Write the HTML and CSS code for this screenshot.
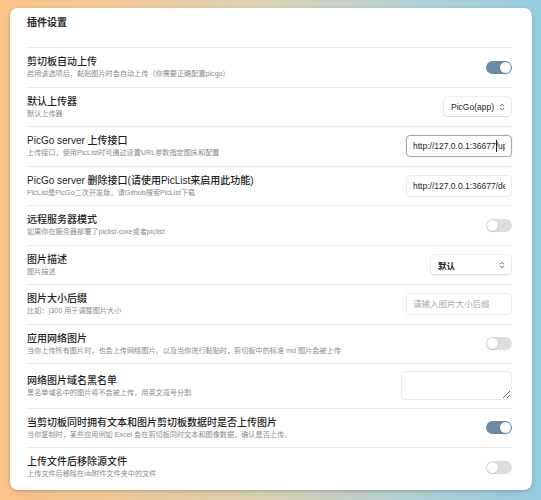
FILE: index.html
```html
<!DOCTYPE html>
<html lang="zh-CN">
<head>
<meta charset="utf-8">
<title>插件设置</title>
<link rel="stylesheet" href="styles.css">
</head>
<body>
<div class="page">
  <div class="card">
    <div class="heading">插件设置</div>

    <div class="row">
      <div class="info">
        <div class="name">剪切板自动上传</div>
        <div class="desc">启用该选项后，黏贴图片时会自动上传（你需要正确配置picgo）</div>
      </div>
      <div class="toggle on"><span class="knob"></span></div>
    </div>

    <div class="row">
      <div class="info">
        <div class="name">默认上传器</div>
        <div class="desc">默认上传器</div>
      </div>
      <div class="select sel-app"><span>PicGo(app)</span>
        <svg class="chev" viewBox="0 0 6 8" width="6" height="8"><path d="M1.2 3 L3 1.3 L4.8 3 M1.2 5 L3 6.7 L4.8 5" fill="none" stroke="#555" stroke-width="0.9" stroke-linecap="round" stroke-linejoin="round"/></svg>
      </div>
    </div>

    <div class="row">
      <div class="info">
        <div class="name">PicGo server 上传接口</div>
        <div class="desc">上传接口，使用PicList时可通过设置URL参数指定图床和配置</div>
      </div>
      <div class="field focused">
        <input class="input" type="text" value="http://127.0.0.1:36677/upload">
        <span class="caret"></span>
      </div>
    </div>

    <div class="row">
      <div class="info">
        <div class="name">PicGo server 删除接口(请使用PicList来启用此功能)</div>
        <div class="desc">PicList是PicGo二次开发版，请Github搜索PicList下载</div>
      </div>
      <div class="field">
        <input class="input" type="text" value="http://127.0.0.1:36677/delete">
      </div>
    </div>

    <div class="row">
      <div class="info">
        <div class="name">远程服务器模式</div>
        <div class="desc">如果你在服务器部署了piclist-core或者piclist</div>
      </div>
      <div class="toggle"><span class="knob"></span></div>
    </div>

    <div class="row">
      <div class="info">
        <div class="name">图片描述</div>
        <div class="desc">图片描述</div>
      </div>
      <div class="select sel-desc"><span class="cjk">默认</span>
        <svg class="chev" viewBox="0 0 6 8" width="6" height="8"><path d="M1.2 3 L3 1.3 L4.8 3 M1.2 5 L3 6.7 L4.8 5" fill="none" stroke="#555" stroke-width="0.9" stroke-linecap="round" stroke-linejoin="round"/></svg>
      </div>
    </div>

    <div class="row">
      <div class="info">
        <div class="name">图片大小后缀</div>
        <div class="desc">比如：|300 用于调整图片大小</div>
      </div>
      <div class="field">
        <input class="input" type="text" placeholder="请输入图片大小后缀">
      </div>
    </div>

    <div class="row">
      <div class="info">
        <div class="name">应用网络图片</div>
        <div class="desc">当你上传所有图片时，也会上传网络图片。以及当你进行黏贴时，剪切板中的标准 md 图片会被上传</div>
      </div>
      <div class="toggle"><span class="knob"></span></div>
    </div>

    <div class="row">
      <div class="info">
        <div class="name">网络图片域名黑名单</div>
        <div class="desc">黑名单域名中的图片将不会被上传，用英文逗号分割</div>
      </div>
      <textarea class="textarea"></textarea>
    </div>

    <div class="row">
      <div class="info">
        <div class="name">当剪切板同时拥有文本和图片剪切板数据时是否上传图片</div>
        <div class="desc">当你复制时，某些应用例如 Excel 会在剪切板同时文本和图像数据，确认是否上传。</div>
      </div>
      <div class="toggle on"><span class="knob"></span></div>
    </div>

    <div class="row last">
      <div class="info">
        <div class="name">上传文件后移除源文件</div>
        <div class="desc">上传文件后移除在ob附件文件夹中的文件</div>
      </div>
      <div class="toggle"><span class="knob"></span></div>
    </div>
  </div>
</div>
</body>
</html>
```

FILE: styles.css
```css
* { box-sizing: border-box; }

html, body {
  margin: 0;
  padding: 0;
  height: 100%;
}

body {
  font-family: "Liberation Sans", "Noto Sans CJK SC", sans-serif;
  background: linear-gradient(to right, #fbc48a 0%, #f4c996 18%, #dcd3b6 50%, #b4d2d6 75%, #97cde2 100%);
  color: #222;
}

.page {
  padding: 8px 9px 10px 10px;
  height: 100%;
}

.card {
  background: #ffffff;
  border-radius: 8px;
  box-shadow: 0 1px 3px rgba(0, 0, 0, 0.18), 0 3px 10px rgba(0, 0, 0, 0.08);
  padding: 0 20px 5px 17px;
  height: 482px;
}

.heading {
  font-size: 10px;
  font-weight: 700;
  line-height: 14px;
  padding-top: 8px;
  height: 39px;
  color: #1e1e1e;
}

.row {
  display: flex;
  align-items: center;
  justify-content: space-between;
  gap: 12px;
  border-top: 1px solid #ececec;
  padding: 7px 0 7.5px;
}

.info {
  flex: 1;
  min-width: 0;
}

.name {
  font-size: 10px;
  line-height: 14px;
  font-weight: 500;
  color: #1c1c1c;
  white-space: nowrap;
}

.desc {
  font-size: 7.15px;
  line-height: 10px;
  color: #8a8a8a;
  white-space: nowrap;
}

.toggle {
  flex: none;
  width: 26px;
  height: 13px;
  border-radius: 7px;
  background: #dddddd;
  padding: 1px;
  display: flex;
  justify-content: flex-start;
}

.toggle.on {
  background: #6b8aa3;
  justify-content: flex-end;
}

.knob {
  width: 11px;
  height: 11px;
  border-radius: 50%;
  background: #ffffff;
  box-shadow: 0 0.5px 1.5px rgba(0, 0, 0, 0.25);
}

.select {
  flex: none;
  height: 19px;
  border-radius: 4px;
  background: #ffffff;
  box-shadow: 0 0 0 0.5px rgba(0, 0, 0, 0.12), 0 1px 2px rgba(0, 0, 0, 0.12);
  display: flex;
  align-items: center;
  justify-content: space-between;
  padding: 0 6px 0 7px;
  font-size: 8.5px;
  color: #222;
  margin-right: 1px;
}

.sel-app { width: 67px; }
.sel-desc { width: 80px; }

.select .cjk {
  font-weight: 700;
  font-size: 8.5px;
}

.chev { display: block; }

.field {
  flex: none;
  position: relative;
  width: 106px;
  height: 22px;
}

.input {
  width: 100%;
  height: 100%;
  border: 1px solid #ececec;
  border-radius: 4px;
  background: #ffffff;
  padding: 0 6px;
  font-family: "Liberation Sans", "Noto Sans CJK SC", sans-serif;
  font-size: 8.5px;
  color: #222;
  outline: none;
}

.input::placeholder {
  color: #a8a8a8;
}

.field.focused .input {
  border-color: #a9a9a9;
  box-shadow: 0 0 0 0.5px rgba(0, 0, 0, 0.08);
}

.caret {
  position: absolute;
  left: 90px;
  top: 5px;
  width: 1px;
  height: 12px;
  background: #222;
}

.textarea {
  flex: none;
  width: 111px;
  height: 29px;
  border: 1px solid #ececec;
  border-radius: 4px;
  background: #ffffff;
  resize: vertical;
  outline: none;
  margin: 0;
  font-family: "Liberation Sans", sans-serif;
  font-size: 8.5px;
}
```
